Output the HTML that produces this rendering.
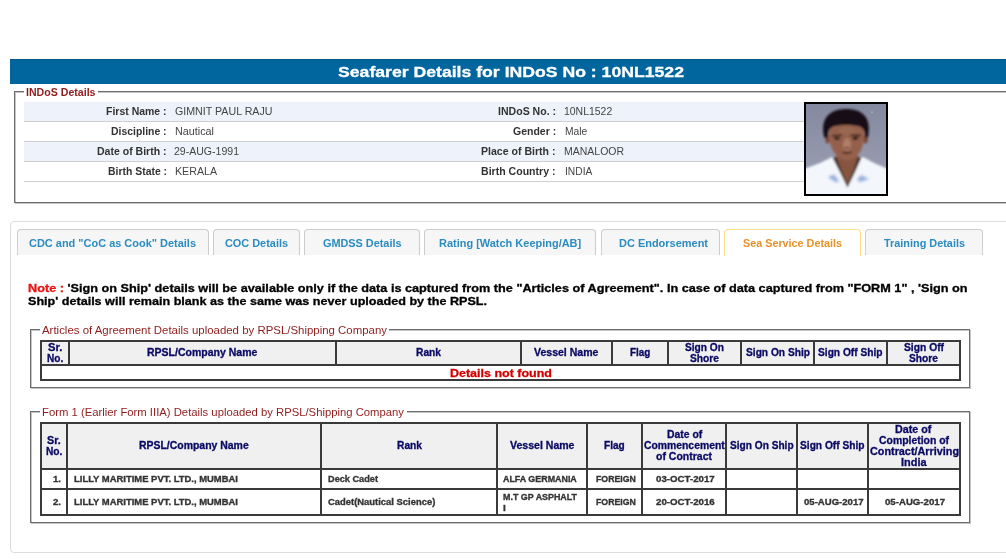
<!DOCTYPE html>
<html><head><meta charset="utf-8"><title>Seafarer Details</title>
<style>
html,body{margin:0;padding:0;background:#fff;}
body{width:1006px;height:559px;position:relative;overflow:hidden;font-family:"Liberation Sans",sans-serif;}
.a{position:absolute;box-sizing:border-box;}
.t{position:absolute;white-space:nowrap;line-height:20px;height:20px;font-weight:bold;transform-origin:0 50%;font-family:"Liberation Sans",sans-serif;}
.bar{left:10px;top:59px;width:996px;height:25px;background:#00669d;border-top:1px solid #005a8c;box-sizing:border-box;}
.fs{border:1px solid #6c6c6c;box-shadow:1px 1px 0 #c4c4c4, inset 1px 1px 0 #c4c4c4;}
.gap{background:#fff;height:4px;}
.row{left:24px;width:780px;height:20px;border-bottom:1px solid #cfcfcf;}
.row.alt{background:#edf2fb;}
.photo{left:804px;top:102px;width:84px;height:94px;border:2px solid #000;overflow:hidden;background:#8f93a8;}
.tabs{left:10px;top:221px;width:1000px;height:332px;border:1px solid #ddd;border-radius:4px;}
.tab{top:229px;height:26px;border:1px solid #ccc;border-bottom:0;border-radius:4px 4px 0 0;background:#f6f6f6;}
.tab.act{height:27px;background:#fff;border-color:#fbe085;}
.tb{background:#3a3a3a;}
.th{background:#f0f0f0;}
.v{-webkit-text-stroke:0.3px currentColor;}

</style></head>
<body>
<div class="a bar"></div>
<!-- INDoS fieldset -->
<div class="a fs" style="left:14px;top:91px;width:1000px;height:112px;"></div>
<div class="a gap" style="left:24px;top:90px;width:74px;"></div>
<div class="a row alt" style="top:102px;"></div>
<div class="a row" style="top:122px;"></div>
<div class="a row alt" style="top:142px;"></div>
<div class="a row" style="top:162px;"></div>
<div class="a photo">
<svg width="80" height="90" viewBox="0 0 80 90" style="display:block">
<defs><filter id="bl" x="-20%" y="-20%" width="140%" height="140%"><feGaussianBlur stdDeviation="0.85"/></filter>
<filter id="bl2" x="-30%" y="-30%" width="160%" height="160%"><feGaussianBlur stdDeviation="1.6"/></filter>
<linearGradient id="bg" x1="0" y1="0" x2="0" y2="1"><stop offset="0" stop-color="#85899f"/><stop offset="0.6" stop-color="#9498ad"/><stop offset="1" stop-color="#a3a6b9"/></linearGradient></defs>
<rect width="80" height="90" fill="url(#bg)"/>
<g filter="url(#bl)">
<path d="M-2 65 L14 59 L26 53 L34 56 L50 56 L57 53 L68 59 L82 65 L82 92 L-2 92 Z" fill="#f3f6fb"/>
<path d="M26.5 53.5 L55.5 53.5 L49 68 L41.5 83.5 L34 68 Z" fill="#2e2424"/>
<path d="M29.5 52 L52.5 52 L47.5 67 L41.5 81 L35.5 67 Z" fill="#85543f"/>
<ellipse cx="21.5" cy="35" rx="2.2" ry="4.5" fill="#7a4a3a"/>
<ellipse cx="59.5" cy="35" rx="2.2" ry="4.5" fill="#7a4a3a"/>
<path d="M23 30 C23 18 30 15 41 15 C52 15 58 18 58 30 C58 40 56 47 50 53 C46 57.5 36 57.5 32 53 C26 47 23 40 23 30 Z" fill="#94604b"/>
<ellipse cx="41" cy="41" rx="4" ry="7" fill="#b07d68"/>
<ellipse cx="41.5" cy="27" rx="9" ry="4" fill="#9a6751"/>
<path d="M17.5 30 C15 13 25 5 40 5 C56 5 65 13 62.5 30 C62 35 60 36 59 31 C58.5 25 56 23 52 22 C46 20.5 34 20.5 29 22 C25 23 22.5 25 22 31 C21 36 18 35 17.5 30 Z" fill="#141115"/>
<path d="M26 31 L36 30.6 L36 32 L26 32.6 Z" fill="#2a1714"/>
<path d="M44.5 30.6 L54.5 30.8 L54.5 32.4 L44.5 32 Z" fill="#2a1714"/>
<ellipse cx="31" cy="34.5" rx="3" ry="1.3" fill="#1f1210"/>
<ellipse cx="49.3" cy="34.4" rx="3" ry="1.3" fill="#1f1210"/>
<ellipse cx="41" cy="48.6" rx="5" ry="1.3" fill="#5a2f27"/>
<ellipse cx="41" cy="44.2" rx="3" ry="0.9" fill="#6d4133"/>
</g>
<g filter="url(#bl2)" opacity="0.8">
<path d="M22 73 L28 70.5 L33 77 L30 78.5 Z" fill="#7f9bd6"/>
<path d="M63 75 L55 71 L51 76 L54 78 Z" fill="#7f9bd6"/>
</g>
<circle cx="66" cy="8" r="0.6" fill="#e8e8f0"/>
</svg>
</div>
<!-- Tabs widget -->
<div class="a tabs"></div>
<div class="a tab" style="left:17px;width:192px;"></div>
<div class="a tab" style="left:213px;width:87px;"></div>
<div class="a tab" style="left:304px;width:116px;"></div>
<div class="a tab" style="left:424px;width:172px;"></div>
<div class="a tab" style="left:601px;width:119px;"></div>
<div class="a tab act" style="left:724px;width:137px;"></div>
<div class="a tab" style="left:865px;width:118px;"></div>
<!-- Fieldset 2 -->
<div class="a fs" style="left:30px;top:329px;width:940px;height:59px;"></div>
<div class="a gap" style="left:40px;top:328px;width:349px;"></div>
<!-- Table 1 -->
<div class="a th" style="left:40px;top:340px;width:921px;height:25px;"></div>
<div class="a tb" style="left:40px;top:340px;width:921px;height:2px;"></div>
<div class="a tb" style="left:40px;top:364px;width:921px;height:2px;"></div>
<div class="a tb" style="left:40px;top:379px;width:921px;height:2px;"></div>
<div class="a tb" style="left:40px;top:340px;width:2px;height:41px;"></div>
<div class="a tb" style="left:959px;top:340px;width:2px;height:41px;"></div>
<div class="a tb" style="left:68px;top:340px;width:2px;height:25px;"></div>
<div class="a tb" style="left:335px;top:340px;width:2px;height:25px;"></div>
<div class="a tb" style="left:520px;top:340px;width:2px;height:25px;"></div>
<div class="a tb" style="left:611px;top:340px;width:2px;height:25px;"></div>
<div class="a tb" style="left:667px;top:340px;width:2px;height:25px;"></div>
<div class="a tb" style="left:740px;top:340px;width:2px;height:25px;"></div>
<div class="a tb" style="left:813px;top:340px;width:2px;height:25px;"></div>
<div class="a tb" style="left:886px;top:340px;width:2px;height:25px;"></div>
<!-- Fieldset 3 -->
<div class="a fs" style="left:30px;top:411px;width:940px;height:112px;"></div>
<div class="a gap" style="left:40px;top:410px;width:367px;"></div>
<!-- Table 2 -->
<div class="a th" style="left:40px;top:422px;width:921px;height:47px;"></div>
<div class="a tb" style="left:40px;top:422px;width:921px;height:2px;"></div>
<div class="a tb" style="left:40px;top:468px;width:921px;height:2px;"></div>
<div class="a tb" style="left:40px;top:488px;width:921px;height:2px;"></div>
<div class="a tb" style="left:40px;top:514px;width:921px;height:2px;"></div>
<div class="a tb" style="left:40px;top:422px;width:2px;height:94px;"></div>
<div class="a tb" style="left:959px;top:422px;width:2px;height:94px;"></div>
<div class="a tb" style="left:66px;top:422px;width:2px;height:94px;"></div>
<div class="a tb" style="left:320px;top:422px;width:2px;height:94px;"></div>
<div class="a tb" style="left:496px;top:422px;width:2px;height:94px;"></div>
<div class="a tb" style="left:586px;top:422px;width:2px;height:94px;"></div>
<div class="a tb" style="left:641px;top:422px;width:2px;height:94px;"></div>
<div class="a tb" style="left:725px;top:422px;width:2px;height:94px;"></div>
<div class="a tb" style="left:796px;top:422px;width:2px;height:94px;"></div>
<div class="a tb" style="left:867px;top:422px;width:2px;height:94px;"></div>

<span class="t v" style="top:61.50px;font-size:15px;color:#fff;left:338.00px;transform:scaleX(1.1757);">Seafarer Details for INDoS No : 10NL1522</span>
<span class="t" style="top:82.00px;font-size:11px;color:#8e1c1c;left:26.00px;transform:scaleX(0.9634);">INDoS Details</span>
<span class="t" style="top:101.00px;font-size:11px;color:#333;left:106.00px;transform:scaleX(0.9532);">First Name :</span>
<span class="t" style="top:101.00px;font-size:11px;color:#444;font-weight:normal;left:174.50px;transform:scaleX(0.9686);">GIMNIT PAUL RAJU</span>
<span class="t" style="top:101.00px;font-size:11px;color:#333;left:497.70px;transform:scaleX(0.9603);">INDoS No. :</span>
<span class="t" style="top:101.00px;font-size:11px;color:#444;font-weight:normal;left:563.80px;transform:scaleX(0.9492);">10NL1522</span>
<span class="t" style="top:121.00px;font-size:11px;color:#333;left:111.00px;transform:scaleX(0.9474);">Discipline :</span>
<span class="t" style="top:121.00px;font-size:11px;color:#444;font-weight:normal;left:175.00px;transform:scaleX(0.9811);">Nautical</span>
<span class="t" style="top:121.00px;font-size:11px;color:#333;left:512.60px;transform:scaleX(0.9550);">Gender :</span>
<span class="t" style="top:121.00px;font-size:11px;color:#444;font-weight:normal;left:564.80px;transform:scaleX(0.9353);">Male</span>
<span class="t" style="top:141.00px;font-size:11px;color:#333;left:97.00px;transform:scaleX(0.9569);">Date of Birth :</span>
<span class="t" style="top:141.00px;font-size:11px;color:#444;font-weight:normal;left:174.00px;transform:scaleX(0.9576);">29-AUG-1991</span>
<span class="t" style="top:141.00px;font-size:11px;color:#333;left:481.30px;transform:scaleX(0.9597);">Place of Birth :</span>
<span class="t" style="top:141.00px;font-size:11px;color:#444;font-weight:normal;left:563.80px;transform:scaleX(0.9544);">MANALOOR</span>
<span class="t" style="top:161.00px;font-size:11px;color:#333;left:107.50px;transform:scaleX(0.9480);">Birth State :</span>
<span class="t" style="top:161.00px;font-size:11px;color:#444;font-weight:normal;left:175.00px;transform:scaleX(0.9673);">KERALA</span>
<span class="t" style="top:161.00px;font-size:11px;color:#333;left:481.30px;transform:scaleX(0.9599);">Birth Country :</span>
<span class="t" style="top:161.00px;font-size:11px;color:#444;font-weight:normal;left:564.80px;transform:scaleX(0.9304);">INDIA</span>
<span class="t" style="top:233.00px;font-size:11px;color:#2a8cc0;left:29.00px;transform:scaleX(0.9969);">CDC and "CoC as Cook" Details</span>
<span class="t" style="top:233.00px;font-size:11px;color:#2a8cc0;left:225.00px;transform:scaleX(0.9909);">COC Details</span>
<span class="t" style="top:233.00px;font-size:11px;color:#2a8cc0;left:322.80px;transform:scaleX(0.9878);">GMDSS Details</span>
<span class="t" style="top:233.00px;font-size:11px;color:#2a8cc0;left:439.30px;transform:scaleX(0.9972);">Rating [Watch Keeping/AB]</span>
<span class="t" style="top:233.00px;font-size:11px;color:#2a8cc0;left:619.30px;transform:scaleX(0.9972);">DC Endorsement</span>
<span class="t" style="top:233.00px;font-size:11px;color:#e6922a;left:743.00px;transform:scaleX(0.9811);">Sea Service Details</span>
<span class="t" style="top:233.00px;font-size:11px;color:#2a8cc0;left:883.70px;transform:scaleX(0.9887);">Training Details</span>
<span class="t v" style="top:278.00px;font-size:11px;color:#000;left:28.40px;transform:scaleX(1.1538);"><span style="color:#ee1111">Note :</span> 'Sign on Ship' details will be available only if the data is captured from the "Articles of Agreement". In case of data captured from "FORM 1" , 'Sign on</span>
<span class="t v" style="top:291.00px;font-size:11px;color:#000;left:28.40px;transform:scaleX(1.1441);">Ship' details will remain blank as the same was never uploaded by the RPSL.</span>
<span class="t" style="top:320.20px;font-size:11.5px;color:#8e1c1c;font-weight:normal;left:42.00px;transform:scaleX(0.9939);">Articles of Agreement Details uploaded by RPSL/Shipping Company</span>
<span class="t" style="top:402.00px;font-size:11.5px;color:#8e1c1c;font-weight:normal;left:42.00px;transform:scaleX(0.9816);">Form 1 (Earlier Form IIIA) Details uploaded by RPSL/Shipping Company</span>
<span class="t v" style="top:338.00px;font-size:10px;color:#0a0a64;left:47.85px;transform:scaleX(1.1175);">Sr.</span>
<span class="t v" style="top:348.70px;font-size:10px;color:#0a0a64;left:47.20px;transform:scaleX(1.0056);">No.</span>
<span class="t v" style="top:342.80px;font-size:10px;color:#0a0a64;left:147.20px;transform:scaleX(1.0511);">RPSL/Company Name</span>
<span class="t v" style="top:342.80px;font-size:10px;color:#0a0a64;left:416.00px;transform:scaleX(1.0224);">Rank</span>
<span class="t v" style="top:342.80px;font-size:10px;color:#0a0a64;left:534.00px;transform:scaleX(1.0528);">Vessel Name</span>
<span class="t v" style="top:342.80px;font-size:10px;color:#0a0a64;left:630.05px;transform:scaleX(0.9872);">Flag</span>
<span class="t v" style="top:338.00px;font-size:10px;color:#0a0a64;left:685.00px;transform:scaleX(1.0171);">Sign On</span>
<span class="t v" style="top:348.70px;font-size:10px;color:#0a0a64;left:690.00px;transform:scaleX(1.0232);">Shore</span>
<span class="t v" style="top:342.80px;font-size:10px;color:#0a0a64;left:745.50px;transform:scaleX(1.0194);">Sign On Ship</span>
<span class="t v" style="top:342.80px;font-size:10px;color:#0a0a64;left:818.20px;transform:scaleX(1.0201);">Sign Off Ship</span>
<span class="t v" style="top:338.00px;font-size:10px;color:#0a0a64;left:903.60px;transform:scaleX(1.0285);">Sign Off</span>
<span class="t v" style="top:348.70px;font-size:10px;color:#0a0a64;left:909.00px;transform:scaleX(1.0232);">Shore</span>
<span class="t v" style="top:363.00px;font-size:11.5px;color:#d40000;left:449.70px;transform:scaleX(1.0860);">Details not found</span>
<span class="t v" style="top:430.60px;font-size:10px;color:#0a0a64;left:47.30px;transform:scaleX(1.0784);">Sr.</span>
<span class="t v" style="top:441.50px;font-size:10px;color:#0a0a64;left:46.10px;transform:scaleX(1.0180);">No.</span>
<span class="t v" style="top:436.00px;font-size:10px;color:#0a0a64;left:139.25px;transform:scaleX(1.0445);">RPSL/Company Name</span>
<span class="t v" style="top:436.00px;font-size:10px;color:#0a0a64;left:396.90px;transform:scaleX(1.0224);">Rank</span>
<span class="t v" style="top:436.00px;font-size:10px;color:#0a0a64;left:509.95px;transform:scaleX(1.0544);">Vessel Name</span>
<span class="t v" style="top:436.00px;font-size:10px;color:#0a0a64;left:604.25px;transform:scaleX(1.0067);">Flag</span>
<span class="t v" style="top:424.60px;font-size:10px;color:#0a0a64;left:666.80px;transform:scaleX(1.0382);">Date of</span>
<span class="t v" style="top:436.00px;font-size:10px;color:#0a0a64;left:643.65px;transform:scaleX(1.0371);">Commencement</span>
<span class="t v" style="top:446.60px;font-size:10px;color:#0a0a64;left:656.00px;transform:scaleX(1.0498);">of Contract</span>
<span class="t v" style="top:436.00px;font-size:10px;color:#0a0a64;left:729.90px;transform:scaleX(1.0130);">Sign On Ship</span>
<span class="t v" style="top:436.00px;font-size:10px;color:#0a0a64;left:800.20px;transform:scaleX(1.0201);">Sign Off Ship</span>
<span class="t v" style="top:419.80px;font-size:10px;color:#0a0a64;left:894.50px;transform:scaleX(1.0735);">Date of</span>
<span class="t v" style="top:430.60px;font-size:10px;color:#0a0a64;left:879.10px;transform:scaleX(1.0414);">Completion of</span>
<span class="t v" style="top:441.60px;font-size:10px;color:#0a0a64;left:869.60px;transform:scaleX(1.0823);">Contract/Arriving</span>
<span class="t v" style="top:452.60px;font-size:10px;color:#0a0a64;left:901.35px;transform:scaleX(1.0924);">India</span>
<span class="t v" style="top:469.00px;font-size:8.4px;color:#333;left:52.60px;transform:scaleX(1.1429);">1.</span>
<span class="t v" style="top:469.00px;font-size:8.4px;color:#333;left:73.70px;transform:scaleX(1.1273);">LILLY MARITIME PVT. LTD., MUMBAI</span>
<span class="t v" style="top:492.00px;font-size:8.4px;color:#333;left:52.60px;transform:scaleX(1.1429);">2.</span>
<span class="t v" style="top:492.00px;font-size:8.4px;color:#333;left:73.70px;transform:scaleX(1.1273);">LILLY MARITIME PVT. LTD., MUMBAI</span>
<span class="t v" style="top:469.00px;font-size:8.4px;color:#333;left:327.50px;transform:scaleX(1.0959);">Deck Cadet</span>
<span class="t v" style="top:492.00px;font-size:8.4px;color:#333;left:327.50px;transform:scaleX(1.1245);">Cadet(Nautical Science)</span>
<span class="t v" style="top:469.00px;font-size:8.4px;color:#333;left:503.40px;transform:scaleX(1.0621);">ALFA GERMANIA</span>
<span class="t v" style="top:487.00px;font-size:8.4px;color:#333;left:503.40px;transform:scaleX(1.0626);">M.T GP ASPHALT</span>
<span class="t v" style="top:497.50px;font-size:8.4px;color:#333;left:503.40px;transform:scaleX(1.2027);">I</span>
<span class="t v" style="top:469.00px;font-size:8.4px;color:#333;left:595.80px;transform:scaleX(1.0431);">FOREIGN</span>
<span class="t v" style="top:492.00px;font-size:8.4px;color:#333;left:595.80px;transform:scaleX(1.0431);">FOREIGN</span>
<span class="t v" style="top:469.00px;font-size:8.4px;color:#333;left:655.80px;transform:scaleX(1.1567);">03-OCT-2017</span>
<span class="t v" style="top:492.00px;font-size:8.4px;color:#333;left:655.80px;transform:scaleX(1.1567);">20-OCT-2016</span>
<span class="t v" style="top:492.00px;font-size:8.4px;color:#333;left:804.00px;transform:scaleX(1.1431);">05-AUG-2017</span>
<span class="t v" style="top:492.00px;font-size:8.4px;color:#333;left:885.00px;transform:scaleX(1.1507);">05-AUG-2017</span>
</body></html>
